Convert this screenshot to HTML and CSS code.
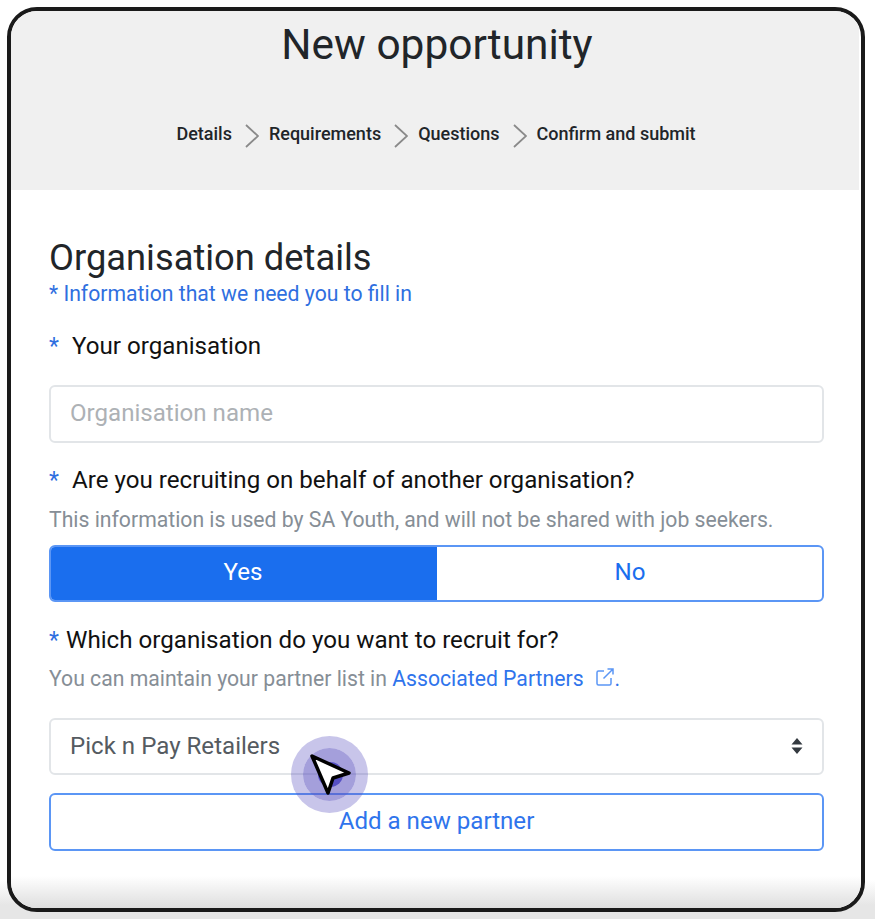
FILE: index.html
```html
<!DOCTYPE html>
<html lang="en">
  <head>
    <meta charset="UTF-8" />
    <meta name="viewport" content="width=device-width, initial-scale=1.0" />
    <title>New opportunity</title>
    <link rel="stylesheet" href="styles.css">
  </head>
  <body>
    <!-- rounded frame -->
    <div class="frame">
      <!-- grey header -->
      <div class="top">
        <h1 class="title">New opportunity</h1>
        <div class="steps">
          <span>Details</span>
          <svg class="chev" viewBox="0 0 14 24"><path d="M1 1l12 11L1 23" /></svg>
          <span>Requirements</span>
          <svg class="chev" viewBox="0 0 14 24"><path d="M1 1l12 11L1 23" /></svg>
          <span>Questions</span>
          <svg class="chev" viewBox="0 0 14 24"><path d="M1 1l12 11L1 23" /></svg>
          <span>Confirm and submit</span>
        </div>
      </div>
      <!-- form -->
      <div class="panel">
        <h2 class="heading">Organisation details</h2>
        <p class="note">* Information that we need you to fill in</p>

        <div class="label label-first"><span class="star">*</span>Your organisation</div>
        <input class="field" type="text" placeholder="Organisation name" />

        <div class="label label-second"><span class="star">*</span>Are you recruiting on behalf of another organisation?</div>
        <p class="hint">This information is used by SA Youth, and will not be shared with job seekers.</p>
        <div class="toggle">
          <div class="opt on">Yes</div>
          <div class="opt off">No</div>
        </div>

        <div class="label label-third"><span class="star tight">*</span>Which organisation do you want to recruit for?</div>
        <p class="hint">You can maintain your partner list in <a class="link" href="#">Associated Partners</a><svg class="ext" viewBox="0 0 20 20"><path d="M16 11v5.500a1.500 1.500 0 0 1-1.500 1.500h-11a1.500 1.500 0 0 1-1.500-1.500v-11a1.500 1.500 0 0 1 1.500-1.500H9M12.500 2H18v5.500M18 2L8.500 11.500" /></svg><span class="link">.</span></p>
        <div class="select">
          <span>Pick n Pay Retailers</span>
          <svg class="updown" viewBox="0 0 12 16"><path d="M6 0l5.500 6.500H.5zM6 16L.5 9.500h11z" /></svg>
        </div>
        <div class="add">Add a new partner</div>
      </div>
      <!-- mouse pointer, sits over the form -->
      <div class="pointer">
        <div class="ring"></div>
        <div class="blob"></div>
        <svg class="arrow" viewBox="0 0 77 77"><path d="M21 20L58 37 42 42 37 57z" /></svg>
      </div>
    </div>
  </body>
</html>
```

FILE: styles.css
```css
* {
  padding: 0;
  margin: 0;
  box-sizing: border-box;
}
html,
body {
  height: 100%;
}
body {
  padding: 7px 10px 7px 7px;
  overflow: hidden;
  font-family: Roboto, "Liberation Sans", sans-serif;
  background: linear-gradient(#fff 880px, #e6e6e6 905px);
}
.frame {
  position: relative;
  height: 905px;
  display: flex;
  flex-direction: column;
  border: 4px solid #1a1a1a;
  border-radius: 30px;
  overflow: hidden;
  background-color: #fff;
}
.top {
  height: 179px;
  flex: none;
  margin-right: 2px;
  text-align: center;
  color: #212529;
  background-color: #f0f0f0;
}
.title {
  padding-left: 4px;
  font-size: 42.400px;
  font-weight: 400;
  line-height: 50px;
  margin-top: 9px;
}
.steps {
  display: flex;
  justify-content: center;
  align-items: center;
  gap: 9.750px;
  margin-top: 50px;
  padding-left: 2px;
  font-size: 18px;
  font-weight: 500;
  line-height: 24px;
}
.chev {
  width: 14px;
  height: 24px;
  margin: 4px 0 0 3.500px;
}
.chev path {
  fill: none;
  stroke: #8a8a8a;
  stroke-width: 1.800;
}
.panel {
  flex: 1;
  padding: 0 37px 0 38px;
  background: linear-gradient(#fff calc(100% - 32px), #dedede);
}
.heading {
  margin-top: 46px;
  font-size: 36.300px;
  font-weight: 400;
  line-height: 44px;
  color: #212529;
}
.note {
  margin-top: 1px;
  font-size: 21.200px;
  line-height: 26px;
  color: #2f6fe0;
}
.label {
  font-size: 24.150px;
  line-height: 30px;
  color: #111;
}
.label-first {
  margin-top: 24px;
}
.label-second {
  margin-top: 22px;
}
.label-third {
  margin-top: 23px;
}
.star {
  display: inline-block;
  width: 23px;
  font-size: 23px;
  color: #2f6fe0;
}
.star.tight {
  width: 17px;
}
.field {
  display: block;
  width: 100%;
  height: 58px;
  margin-top: 23px;
  padding: 0 19px 2px;
  border: 2px solid #e2e5e8;
  border-radius: 6px;
  outline: none;
  font-family: inherit;
  font-size: 24.100px;
}
.field::placeholder {
  color: #adb1b5;
  opacity: 1;
}
.hint {
  margin-top: 10px;
  font-size: 21.200px;
  line-height: 28px;
  white-space: nowrap;
  color: #868e96;
}
.label-third + .hint {
  margin-top: 9px;
}
.toggle {
  display: flex;
  height: 57px;
  margin-top: 11px;
  border: 2px solid #5b96f5;
  border-radius: 6px;
  overflow: hidden;
}
.opt {
  flex: 1;
  display: flex;
  justify-content: center;
  align-items: center;
  padding-bottom: 3px;
  font-size: 24.100px;
  color: #1a6eee;
}
.opt.on {
  padding-right: 2px;
  color: #fff;
  background-color: #1a6eee;
}
.opt.off {
  padding-left: 1px;
}
.link {
  color: #2f74ec;
  text-decoration: none;
}
.ext {
  width: 20px;
  height: 20px;
  margin-left: 11px;
  vertical-align: -1px;
}
.ext path {
  fill: none;
  stroke: #5b96f5;
  stroke-width: 1.500;
}
.select {
  display: flex;
  justify-content: space-between;
  align-items: center;
  height: 57px;
  margin-top: 25px;
  padding: 0 20px 2px 19px;
  border: 2px solid #e2e5e8;
  border-radius: 6px;
  font-size: 24.100px;
  color: #555b61;
}
.updown {
  width: 12px;
  height: 16px;
  margin-right: -1px;
}
.updown path {
  fill: #343a40;
}
.add {
  display: flex;
  justify-content: center;
  align-items: center;
  height: 58px;
  margin-top: 18px;
  padding-bottom: 2px;
  border: 2px solid #5b96f5;
  border-radius: 6px;
  font-size: 24.100px;
  color: #2f74ec;
}
.pointer {
  position: absolute;
  left: 280px;
  top: 725px;
  width: 77px;
  height: 77px;
}
.ring {
  width: 100%;
  height: 100%;
  border-radius: 50%;
  border: 12px solid rgba(89, 80, 190, 0.33);
  background: rgba(89, 80, 190, 0.55) padding-box;
}
.blob {
  position: absolute;
  left: 27px;
  top: 26px;
  width: 25px;
  height: 25px;
  border-radius: 50%;
  background-color: #5650c4;
}
.arrow {
  position: absolute;
  left: 0;
  top: 0;
  width: 77px;
  height: 77px;
}
.arrow path {
  fill: #fff;
  stroke: #000;
  stroke-width: 3.500;
  stroke-linejoin: round;
}
```
